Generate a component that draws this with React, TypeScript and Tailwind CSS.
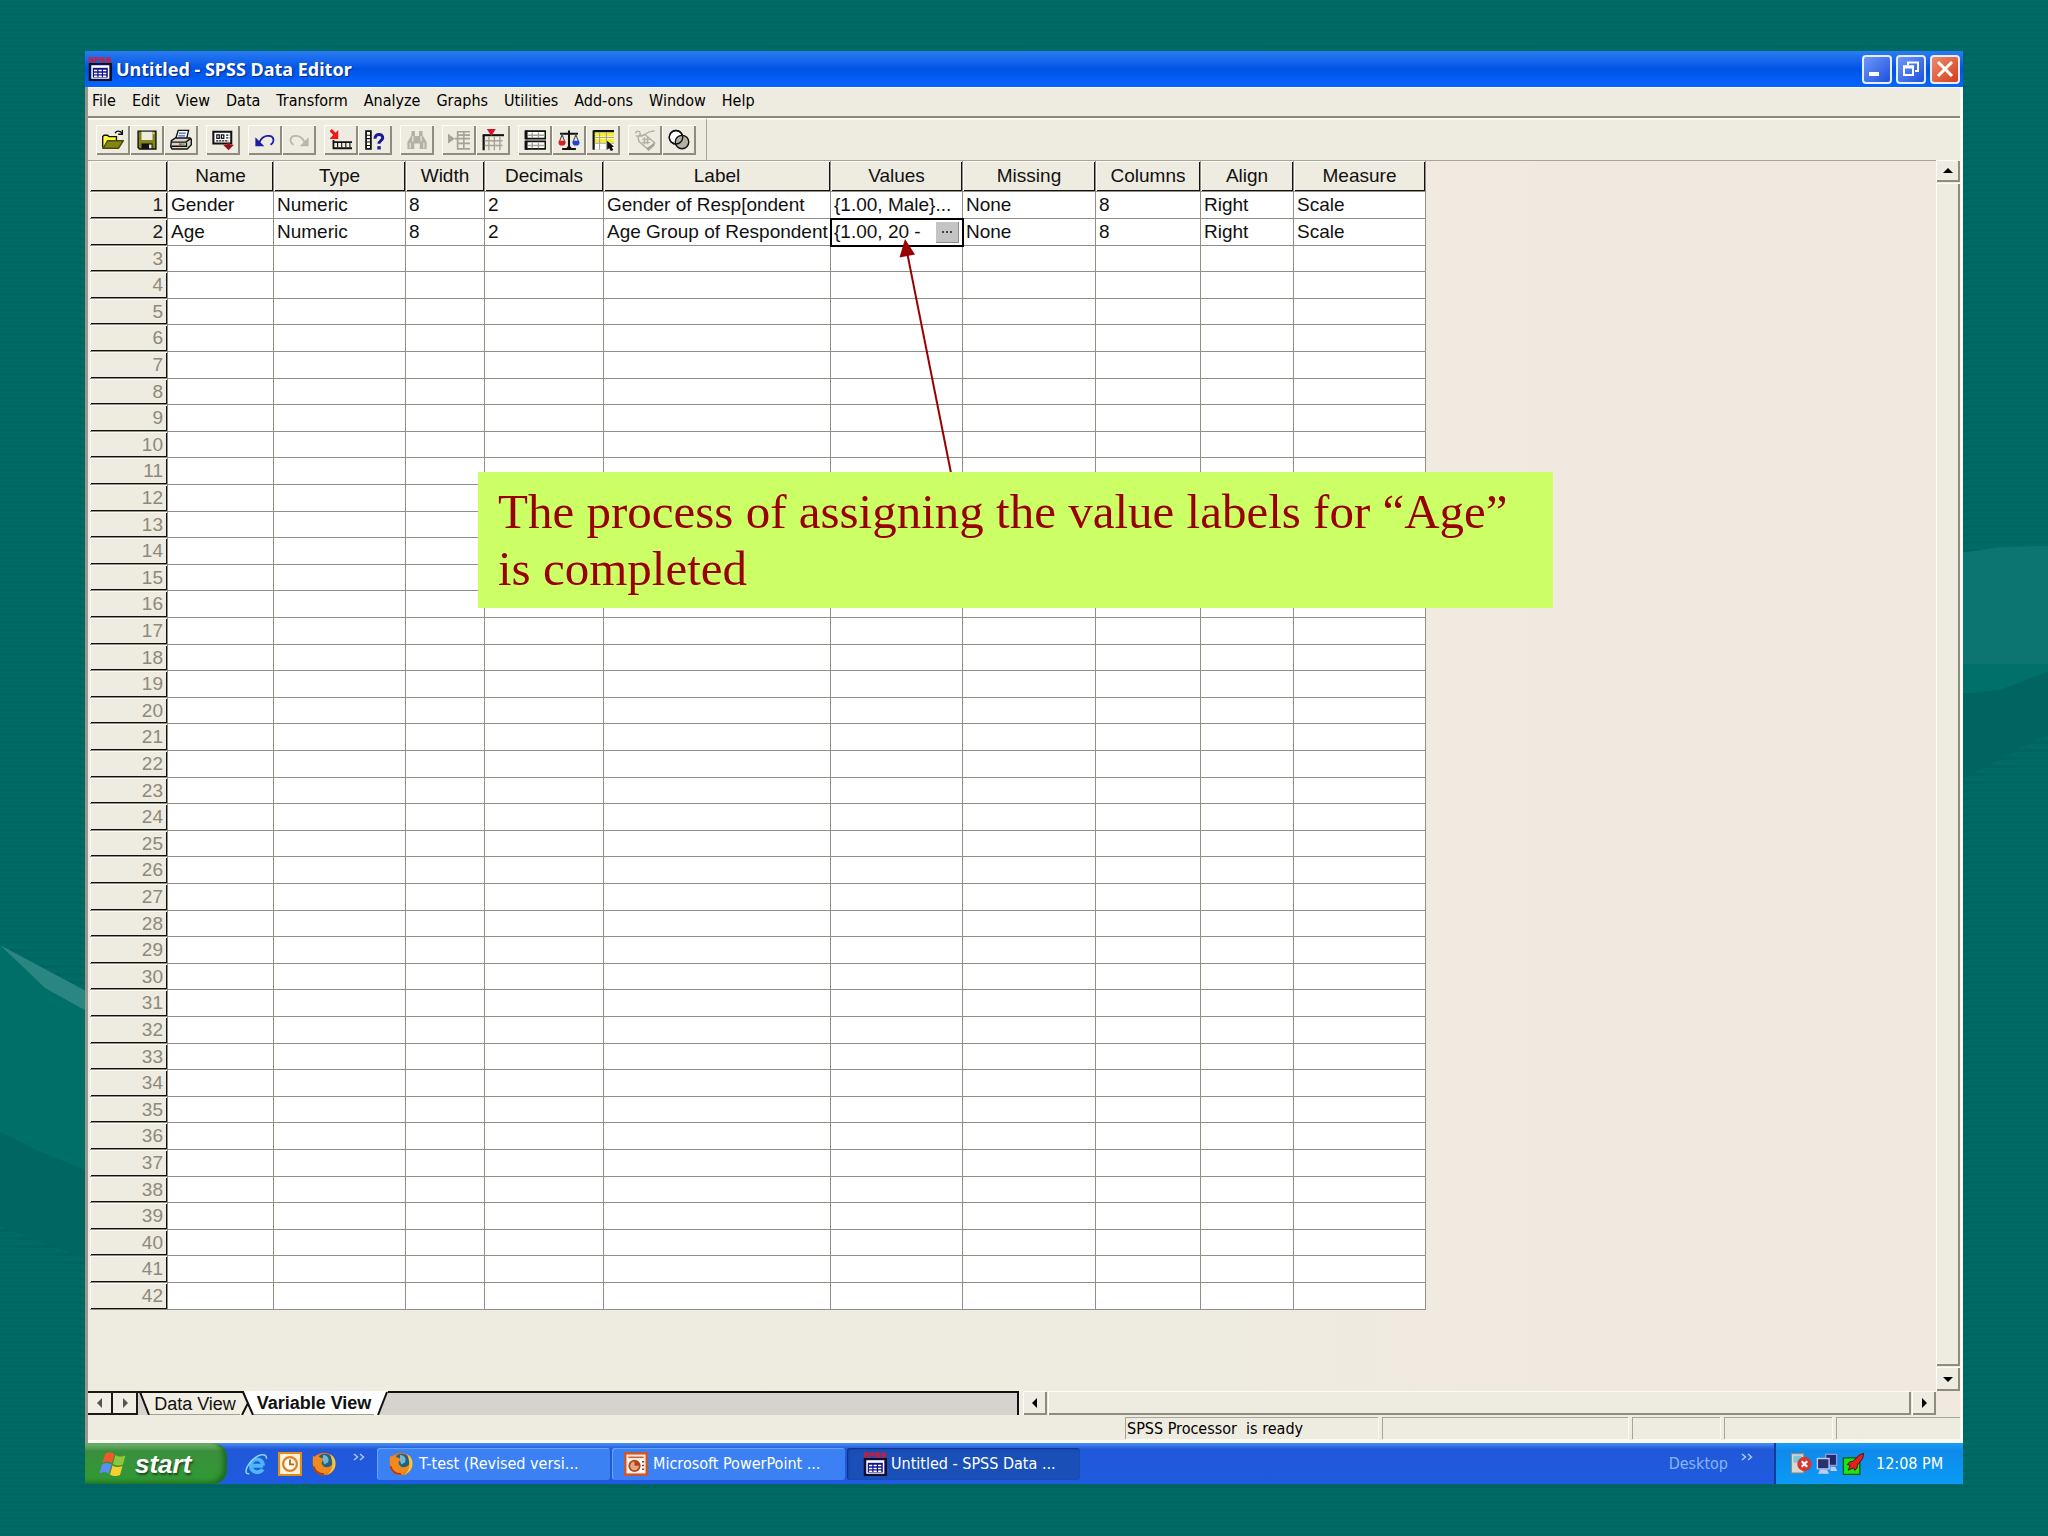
import React from "react";

type Variable = {
  name: string;
  type: string;
  width: string;
  decimals: string;
  label: string;
  values: string;
  missing: string;
  columns: string;
  align: string;
  measure: string;
};

const variables: Variable[] = [
  {
    name: "Gender",
    type: "Numeric",
    width: "8",
    decimals: "2",
    label: "Gender of Resp[ondent",
    values: "{1.00, Male}...",
    missing: "None",
    columns: "8",
    align: "Right",
    measure: "Scale",
  },
  {
    name: "Age",
    type: "Numeric",
    width: "8",
    decimals: "2",
    label: "Age Group of Respondent",
    values: "{1.00, 20 -",
    missing: "None",
    columns: "8",
    align: "Right",
    measure: "Scale",
  },
];

const columns: { key: keyof Variable; title: string; size: string }[] = [
  { key: "name", title: "Name", size: "w-[106px]" },
  { key: "type", title: "Type", size: "w-[132px]" },
  { key: "width", title: "Width", size: "w-[79px]" },
  { key: "decimals", title: "Decimals", size: "w-[119px]" },
  { key: "label", title: "Label", size: "w-[227px]" },
  { key: "values", title: "Values", size: "w-[132px]" },
  { key: "missing", title: "Missing", size: "w-[133px]" },
  { key: "columns", title: "Columns", size: "w-[105px]" },
  { key: "align", title: "Align", size: "w-[93px]" },
  { key: "measure", title: "Measure", size: "w-[132px]" },
];

const rows = Array.from({ length: 42 }, (_, i) => i + 1);

/* ---------- small drawings ---------- */

function Glyph({ children, className = "size-[22px]" }: { children: React.ReactNode; className?: string }) {
  return (
    <svg viewBox="0 0 16 16" className={className} fill="none" aria-hidden="true">
      {children}
    </svg>
  );
}

const OpenIcon = () => (
  <Glyph>
    <path d="M9.500 3c1-2 3.500-2 5 0M14.800 .8v3h-3" stroke="#111" />
    <path d="M.5 13.500V5.500L1.500 4.500H4l1 1h5.500v3" fill="#ffff33" stroke="#111" />
    <path d="M.8 14L4 8.500h11.500l-3.500 5.500z" fill="#84841a" stroke="#4c4c00" />
  </Glyph>
);
const SaveIcon = () => (
  <Glyph>
    <path d="M1.500 1.500h13v13h-12l-1-1z" fill="#84841a" stroke="#111" />
    <path d="M4 2h8v6H4z" fill="#eeebe0" />
    <path d="M4 10.500h8v4H4z" fill="#111" />
    <path d="M9.500 11.300h1.800v2.700H9.500z" fill="#eeebe0" />
    <path d="M12.800 2.500v1.200" stroke="#eeebe0" />
  </Glyph>
);
const PrintIcon = () => (
  <Glyph>
    <path d="M4 7.500l2-6.500h7.500L12 7.500z" fill="#fff" stroke="#111" />
    <path d="M6.500 3h5M6 5h5" stroke="#3b62c8" />
    <path d="M1 8.500L4 6.500h10.500l1 1v4l-3 3H1.500L.5 13z" fill="#d8d5cc" stroke="#111" />
    <path d="M1 9.500h10.500l3.500-2.500M1 12.500h11V10" stroke="#111" />
    <path d="M6.500 11h2" stroke="#e22" />
    <path d="M8.500 11h2" stroke="#2c2" />
  </Glyph>
);
const RecallIcon = () => (
  <Glyph>
    <path d="M1 2h13v8.500H1z" fill="#fff" stroke="#111" strokeWidth="1.500" />
    <path d="M3.500 4.200h1.800v2.600H3.500zM6.800 4.200h1.800v2.600H6.800z" stroke="#111" strokeWidth=".9" />
    <path d="M10.300 4.500h2.400M10.300 6.500h2.400M3 8.600h9" stroke="#111" strokeWidth=".9" strokeDasharray="1.600 .6" />
    <path d="M8 11.500h8l-4 4z" fill="#9a0f1c" />
    <path d="M11 10h2v2h-2z" fill="#9a0f1c" />
  </Glyph>
);
const UndoIcon = () => (
  <Glyph>
    <path d="M4 9.500c2.500-5.500 9-5.500 10-2.500.6 2-.5 3.500-2 4.500" stroke="#1b1ba8" strokeWidth="1.300" />
    <path d="M1 6v6.500h6.500z" fill="#1b1ba8" />
  </Glyph>
);
const RedoIcon = () => (
  <Glyph>
    <path d="M12 9.500c-2.500-5.500-9-5.500-10-2.500-.6 2 .5 3.500 2 4.500" stroke="#b9b6ad" strokeWidth="1.300" />
    <path d="M15 6v6.500H8.500z" fill="#b9b6ad" />
  </Glyph>
);
const GotoCaseIcon = () => (
  <Glyph>
    <path d="M.5 .8l4 4" stroke="#f01818" strokeWidth="2.400" />
    <path d="M6 .8v6.500H-.5z" fill="#f01818" />
    <path d="M2.500 8v6.500M2 9.500h14M2 14h14" stroke="#111" strokeWidth="1.300" />
    <path d="M5.500 10v3.500M8.500 10v3.500M11.500 10v3.500M14.500 10v3.500" stroke="#111" strokeWidth=".8" />
  </Glyph>
);
const VariablesIcon = () => (
  <Glyph>
    <path d="M1.500 1.500h3.500v13H1.500z" fill="#fff" stroke="#111" strokeWidth="1.300" />
    <path d="M1.500 4.500H5M1.500 7H5M1.500 9.500H5M1.500 12H5" stroke="#111" strokeWidth=".8" />
    <path d="M8 7c0-4.200 6-3.800 5.600-.4-.3 1.900-2.700 1.900-2.700 4.200" stroke="#1b1b98" strokeWidth="2.200" />
    <path d="M9.700 12.500h2.500v2.400H9.700z" fill="#1b1b98" />
  </Glyph>
);
const FindIcon = () => (
  <Glyph>
    <path d="M4 1.500h2.500V5H9.500V1.500H12v3l3 5v5h-5v-4H6v4H1v-5l3-5z" fill="#b3b0a7" />
    <path d="M3 10v4M13 10v4M5 5v4M11 5v4" stroke="#eeebe0" strokeWidth=".8" />
  </Glyph>
);
const InsertCaseIcon = () => (
  <Glyph>
    <path d="M0 3.500L5 7l-5 3.500z" fill="#a5a299" />
    <path d="M7 1.500v13.500M7 2h9M5 7h11M7 10.500h9M7 14.500h9M11.500 2v12.500M7 4.500h9" stroke="#a5a299" strokeWidth="1.200" />
  </Glyph>
);
const InsertVariableIcon = () => (
  <Glyph>
    <path d="M1.200 4.500v11" stroke="#111" strokeWidth="1.600" />
    <path d="M.5 4.500h15.500" stroke="#111" strokeWidth="1.500" />
    <path d="M5 5.500v10M9 5.500v10M13 5.500v10M2 8.500h13M2 12h13" stroke="#a5a299" />
    <path d="M3.500 0h6.500L6.800 5z" fill="#d3132c" />
  </Glyph>
);
const SplitFileIcon = () => (
  <Glyph>
    <path d="M1.500 1.500h14v5.500h-14zM1.500 9h14v5.500h-14z" fill="#fff" stroke="#111" strokeWidth="1.200" />
    <path d="M1.500 1v6.500M1.500 8.500v6.500" stroke="#111" strokeWidth="2.200" />
    <path d="M6 2.500v4M10.500 2.500v4M3 4.500h12M6 10v4M10.500 10v4M3 12h12" stroke="#a5a299" />
  </Glyph>
);
const WeightIcon = () => (
  <Glyph>
    <path d="M8 1v12.500M1.500 3.500h13M3 14.500h10" stroke="#111" strokeWidth="1.500" />
    <path d="M6 14l2-2.500L10 14z" fill="#111" />
    <path d="M3 4L.8 10h4.400zM13 4l-2.200 6h4.400z" stroke="#555" strokeWidth=".8" />
    <path d="M.6 8.500h4.600v2.500l-1 1H1.600l-1-1z" fill="#e21b1b" />
    <path d="M10.800 8.500h4.600v2.500l-1 1h-2.600l-1-1z" fill="#2343d8" />
  </Glyph>
);
const SelectCasesIcon = () => (
  <Glyph>
    <path d="M1 1.500h15v13H1z" fill="#fff" />
    <path d="M2 2.500h14v3H2zM2 7h14v3H2z" fill="#f6ee2a" />
    <path d="M1.200 1v14M1 1.500h15" stroke="#111" strokeWidth="1.600" />
    <path d="M5.500 2.500V15M10.500 2.500V15M2 6.200h14M2 10.400h14" stroke="#a5a299" strokeWidth=".8" />
    <path d="M11 8.500v6.500l1.500-1 1.200 2 1.800-.8-1-1.900 1.500-.6z" fill="#111" />
  </Glyph>
);
const ValueLabelsIcon = () => (
  <Glyph>
    <path d="M1 3c1-2 3-2 3.500 0S2 6 1.500 4.500M5 5c2 1 4-4 10-3.500" stroke="#b3b0a7" />
    <path d="M3 5.500l5-1.500 7 6-4.500 5L3.500 9z" stroke="#b3b0a7" strokeWidth="1.100" />
    <path d="M9 14l6-4v2l-4.500 4z" fill="#a5a299" />
    <path d="M7.500 6v5M9.800 6v5M6 7.500h5.500M6 9.800h5.500" stroke="#b3b0a7" />
  </Glyph>
);
const UseSetsIcon = () => (
  <Glyph>
    <circle cx="5.800" cy="6" r="4.900" fill="#fff" stroke="#111" />
    <circle cx="10.200" cy="9.500" r="4.900" fill="#b3b0a7" stroke="#111" />
    <circle cx="5.800" cy="6" r="4.900" stroke="#111" />
  </Glyph>
);

const SpssIcon = () => (
  <Glyph className="size-6 shrink-0">
    <path
      d="M3.500 .6H1v1.200h2.200V3.200H.5M4.800 3.600V.6h2.300v1.300H4.800M11 .6H8.600v1.200h2.200v1.400H8.300M15 .6h-2.400v1.200h2.200v1.400h-2.500"
      stroke="#e0162b"
      strokeWidth=".9"
    />
    <path d="M1 4.500h14.500V15.500H1z" fill="#10106c" stroke="#111" />
    <path d="M2.200 5.500h12v9h-12z" fill="#fff" />
    <path d="M3.200 7.200h10v6.500h-10z" fill="#10108c" />
    <path d="M4 9h8.500M4 11h8.500M4 12.900h8.500" stroke="#fff" strokeDasharray="2.200 .8" />
  </Glyph>
);
const FirefoxIcon = () => (
  <Glyph className="size-6 shrink-0">
    <circle cx="8" cy="8" r="7.500" fill="#e8731a" />
    <circle cx="8.600" cy="6.400" r="5.200" fill="#23617f" />
    <path d="M7.500 1.800c3 .6 4.200 2.600 3.200 5l-2.500 1.500L7 5z" fill="#74b8cf" />
    <path d="M.8 2.500c1 .9 1.500.5 2.700-1C4.300 3.700 6 3.500 7.500 4.800L6.300 7.300c1 3.600 4.700 3.700 7.700.7-1 5-4 7-7 6.800C2.500 14.500-.5 10 .8 2.500z" fill="#f08a1e" />
    <path d="M12 1.500c3 1.500 4 4.300 3.600 7.300-.4 3-2.900 5.700-5.900 6.500 3-2 4.300-5 3.800-8-.2-2-.6-4-1.500-5.800z" fill="#f9c440" />
    <path d="M1 9.500c1 3.500 3.500 5.300 7 5.300" stroke="#b8380d" strokeWidth="1.200" />
  </Glyph>
);
const ExplorerIcon = () => (
  <Glyph className="size-6">
    <path d="M12.800 9.200H5.200M12.500 11.500c-2.200 3.200-7.800 2.400-7.900-2.300C4.500 3.800 12.500 3.200 12.700 9" stroke="#4db8f5" strokeWidth="2.600" />
    <path d="M15 4.500c.4-4.500-6-3-10 1.500-4 4.300-5 9-1.500 8.500" stroke="#8fd4fb" strokeWidth="1" />
  </Glyph>
);
const OutlookIcon = () => (
  <Glyph className="size-6">
    <path d="M.7.700h14.600v14.600H.7z" fill="#fff4da" stroke="#e8891b" strokeWidth="1.400" />
    <circle cx="8" cy="8" r="4.600" fill="#fffaf0" stroke="#d8852a" strokeWidth="1.500" />
    <path d="M8 5v3.300h2.800" stroke="#b5651b" strokeWidth="1.200" />
  </Glyph>
);
const PowerPointIcon = () => (
  <Glyph className="size-6 shrink-0">
    <path d="M.8.800h14.400v14.400H.8z" fill="#fbe3d6" stroke="#c9562c" strokeWidth="1.600" />
    <path d="M3 3.500h10" stroke="#c9562c" strokeWidth=".9" />
    <path d="M2.600 4.800h10.800v8.800H2.600z" fill="#fff" />
    <circle cx="7" cy="9.200" r="3.500" fill="#e8a583" stroke="#b2431d" strokeWidth="1.200" />
    <path d="M7 9.200V5.700a3.500 3.500 0 013.500 3.500z" fill="#b2431d" />
    <path d="M12 6.500h1.400M12 9h1.400M12 11.500h1.400" stroke="#8a3a1c" />
  </Glyph>
);
const WindowsFlag = () => (
  <svg viewBox="0 0 28 26" className="h-[26px] w-7" aria-hidden="true">
    <path d="M6 3c3-2.500 6-2.500 9.500 0L13 12c-3-2-6.500-2-9.500 0z" fill="#ee5a29" />
    <path d="M16.500 4c3.500 2 6.500 2 10 .5L24 13.500c-3 1.500-6.500 1.500-10-.5z" fill="#8cc83c" />
    <path d="M3 13.500c3-2 6-2 9.500 0L10 22.500c-3-2-6.500-2-9.500 0z" fill="#5a8ff0" />
    <path d="M13.500 14.500c3.500 2 6.500 2 10 .5L21 24c-3 1.500-6.500 1.500-10-.5z" fill="#f8cf2c" />
  </svg>
);
const Chevrons = ({ className }: { className: string }) => (
  <svg viewBox="0 0 12 8" className={className} fill="none" aria-hidden="true">
    <path d="M1 1l3.500 3L1 7M7 1l3.500 3L7 7" stroke="currentColor" strokeWidth="1.500" />
  </svg>
);

function Arrow({ dir, className = "text-black" }: { dir: "up" | "down" | "left" | "right"; className?: string }) {
  const shapes = { up: "M1 8l5-5 5 5z", down: "M1 4l5 5 5-5z", left: "M8 1L3 6l5 5z", right: "M4 1l5 5-5 5z" };
  return (
    <svg viewBox="0 0 12 12" className={`size-3 ${className}`} fill="currentColor" aria-hidden="true">
      <path d={shapes[dir]} />
    </svg>
  );
}

/* ---------- chrome ---------- */

const raised =
  "shadow-[inset_1px_1px_0_#fffdf5,inset_-2px_-2px_0_#8f8b7f] bg-[#eeebe0]";

const uiFont = "font-['DejaVu_Sans_Condensed','Noto_Sans',sans-serif]";

const toolGroups: [string, () => React.ReactElement][][] = [
  [["Open File", OpenIcon], ["Save File", SaveIcon], ["Print", PrintIcon]],
  [["Dialog Recall", RecallIcon]],
  [["Undo", UndoIcon], ["Redo", RedoIcon]],
  [["Go to Case", GotoCaseIcon], ["Variables", VariablesIcon]],
  [["Find", FindIcon]],
  [["Insert Cases", InsertCaseIcon], ["Insert Variable", InsertVariableIcon]],
  [["Split File", SplitFileIcon], ["Weight Cases", WeightIcon], ["Select Cases", SelectCasesIcon]],
  [["Value Labels", ValueLabelsIcon], ["Use Sets", UseSetsIcon]],
];

function Backdrop() {
  return (
    <svg
      className="absolute inset-0 size-full"
      viewBox="0 0 2048 1536"
      preserveAspectRatio="none"
      aria-hidden="true"
    >
      <defs>
        <pattern id="stripes" width="64" height="8" patternUnits="userSpaceOnUse">
          <rect width="64" height="8" fill="#006a65" />
          <rect y="5" width="64" height="3" fill="#006460" />
        </pattern>
      </defs>
      <rect width="2048" height="1536" fill="url(#stripes)" />
      <path d="M0 945L45 988L90 1013V1172L40 1152L0 1132z" fill="#006f68" />
      <path d="M0 1132L40 1152L90 1172V1260L0 1226z" fill="#006661" />
      <path d="M0 945L86 991L90 1013L45 988z" fill="#2a8681" />
      <path d="M1960 553L2000 547L2048 546V668L1960 664z" fill="#0c7571" />
      <path d="M1960 664L2048 664V672L2000 690L1960 694z" fill="#00706a" />
      <path d="M1960 694L2000 690L2048 672V734L1960 780z" fill="#006561" />
    </svg>
  );
}

function TitleBar() {
  const box = "flex h-[29px] w-[30px] items-center justify-center rounded-[4px] border-2 border-[#e6edfb]";
  return (
    <header className="flex h-9 items-center bg-linear-to-b from-[#2a7bf2] via-[#0153e6] to-[#0366ff] pr-[3px] pl-[3px]">
      <SpssIcon />
      <h1 className="ml-1 flex-1 font-['Noto_Sans',sans-serif] text-lg font-bold text-white [text-shadow:1px_1px_1px_#0b2a80]">
        Untitled - SPSS Data Editor
      </h1>
      <div className="flex gap-1">
        <button aria-label="Minimize" className={`${box} bg-linear-to-br from-[#6f96f5] to-[#1d4fe0]`}>
          <svg viewBox="0 0 20 20" className="size-5" aria-hidden="true">
            <path d="M2 13h10v4H2z" fill="#fff" />
          </svg>
        </button>
        <button aria-label="Restore" className={`${box} bg-linear-to-br from-[#6f96f5] to-[#1d4fe0]`}>
          <svg viewBox="0 0 20 20" className="size-5" fill="none" aria-hidden="true">
            <path d="M7 6V3.500h10V12h-3" stroke="#fff" strokeWidth="2" />
            <path d="M3 8.500h9V16H3z" stroke="#fff" strokeWidth="2" />
            <path d="M2 7.500h11" stroke="#fff" strokeWidth="2.500" />
          </svg>
        </button>
        <button aria-label="Close" className={`${box} bg-linear-to-br from-[#ec8a6a] to-[#d23c14]`}>
          <svg viewBox="0 0 20 20" className="size-5" aria-hidden="true">
            <path d="M3 3l14 14M17 3L3 17" stroke="#fff" strokeWidth="3" />
          </svg>
        </button>
      </div>
    </header>
  );
}

function MenuBar() {
  const items = ["File", "Edit", "View", "Data", "Transform", "Analyze", "Graphs", "Utilities", "Add-ons", "Window", "Help"];
  return (
    <nav className={`flex h-[29px] items-center gap-4 border-t border-[#fbf9f2] pb-[3px] pl-1 ${uiFont} text-base text-black`}>
      {items.map((m) => (
        <button key={m}>{m}</button>
      ))}
    </nav>
  );
}

function ToolBar() {
  return (
    <div className="flex h-11 items-stretch border-t-2 border-[#8b877c] bg-[#eeebe0]">
      <div className="flex items-center gap-2 border-t-2 border-r border-t-[#fbf9f2] border-r-[#a9a59b] pr-[10px] pl-2">
        {toolGroups.map((group) => (
          <div key={group[0][0]} className="flex">
            {group.map(([label, Icon]) => (
              <button key={label} aria-label={label} className={`flex h-[30px] w-[34px] items-center justify-center ${raised}`}>
                <Icon />
              </button>
            ))}
          </div>
        ))}
      </div>
      <div className="flex-1 border-t-2 border-[#fbf9f2]" />
    </div>
  );
}

const headCell =
  "border-r border-b border-[#928e86] bg-[#eeebe0] font-normal shadow-[inset_1px_1px_0_#fcfaf2,inset_-1px_-1px_0_#111]";

function VariableTable() {
  return (
    <table className="w-[1336px] table-fixed border-separate border-spacing-0 font-['Liberation_Sans',Arial,sans-serif] text-[19px] leading-6 text-[#111]">
      <thead>
        <tr className="h-[31px]">
          <th className={`w-[78px] ${headCell}`} aria-label="Row" />
          {columns.map((c) => (
            <th key={c.key} scope="col" className={`${c.size} ${headCell}`}>
              {c.title}
            </th>
          ))}
        </tr>
      </thead>
      <tbody>
        {rows.map((n, i) => {
          const v = variables[i];
          return (
            <tr key={n} className={i % 5 === 2 || i % 5 === 4 ? "h-[26px]" : "h-[27px]"}>
              <th scope="row" className={`${headCell} pr-1 text-right ${v ? "text-[#222]" : "text-[#8d897b]"}`}>
                {n}
              </th>
              {columns.map((c) => {
                const active = n === 2 && c.key === "values";
                return (
                  <td
                    key={c.key}
                    className={`overflow-hidden border-r border-b border-[#928e86] bg-white pl-[3px] whitespace-nowrap ${
                      active ? "outline-2 -outline-offset-1 outline-black" : ""
                    }`}
                  >
                    {active ? (
                      <div className="flex items-center justify-between pr-[3px]">
                        <span>{v.values}</span>
                        <button
                          aria-label="Edit value labels"
                          className="flex h-[21px] w-[23px] items-center justify-center border-r border-b border-[#8d8d8d] bg-[#c4c4c4]"
                        >
                          <svg viewBox="0 0 12 4" className="h-1 w-3" aria-hidden="true">
                            <path d="M1 1h2v2H1zM5 1h2v2H5zM9 1h2v2H9z" fill="#444" />
                          </svg>
                        </button>
                      </div>
                    ) : (
                      v?.[c.key]
                    )}
                  </td>
                );
              })}
            </tr>
          );
        })}
      </tbody>
    </table>
  );
}

function SheetTabs() {
  const nav =
    "flex w-[25px] items-center justify-center border-t-2 border-r-2 border-b-2 border-[#1a1a1a] bg-[#f1eee4]";
  return (
    <div className="mr-1 flex w-[931px] shrink-0 font-['Liberation_Sans',Arial,sans-serif] text-lg leading-5">
      <button aria-label="Previous sheet" className={nav}>
        <Arrow dir="left" className="text-[#555]" />
      </button>
      <button aria-label="Next sheet" className={nav}>
        <Arrow dir="right" className="text-[#555]" />
      </button>
      <svg viewBox="0 0 12 24" className="h-6 w-3 shrink-0" aria-hidden="true">
        <path d="M0 0h12v24H0z" fill="#d6d3ce" />
        <path d="M3 0h9v24h-1z" fill="#f1eee4" />
        <path d="M0 1h12" stroke="#111" strokeWidth="2" />
        <path d="M2 1l9 23" stroke="#111" strokeWidth="2" />
      </svg>
      <button className="w-[90px] border-t-2 border-b border-t-[#111] border-b-[#a39f97] bg-[#f1eee4] text-[#111]">Data View</button>
      <svg viewBox="0 0 14 24" className="h-6 w-[14px] shrink-0" aria-hidden="true">
        <path d="M0 0h14v24H0z" fill="#f1eee4" />
        <path d="M4 0h10v24h-1z" fill="#fff" />
        <path d="M0 1h4" stroke="#111" strokeWidth="2" />
        <path d="M3 1l10 23M8 12L2 24" stroke="#111" strokeWidth="2" />
      </svg>
      <button className="w-[120px] border-b border-[#a39f97] bg-white font-bold text-[#111]">Variable View</button>
      <svg viewBox="0 0 14 24" className="h-6 w-[14px] shrink-0" aria-hidden="true">
        <path d="M0 0h14v24H0z" fill="#d6d3ce" />
        <path d="M0 0h13L4 24H0z" fill="#fff" />
        <path d="M13 1L4 24" stroke="#111" strokeWidth="2" />
      </svg>
      <div className="flex-1 border-t-2 border-r-2 border-[#111] bg-[#d6d3ce]" />
    </div>
  );
}

function StatusBar() {
  const pane = "h-[22px] border-t border-l border-[#a9a59b] shadow-[1px_1px_0_#fcfaf2]";
  return (
    <footer className={`flex h-7 items-start gap-1 border-b-[3px] border-[#fcfaf2] pt-0.5 ${uiFont} text-base leading-[22px] text-black`}>
      <div className="flex-1" />
      <div className={`${pane} w-[253px] pl-px whitespace-pre`}>SPSS Processor  is ready</div>
      <div className={`${pane} w-[246px]`} />
      <div className={`${pane} w-[88px]`} />
      <div className={`${pane} w-[108px]`} />
      <div className={`${pane} w-[124px]`} />
    </footer>
  );
}

function TaskBar() {
  const task = `flex h-8 w-[233px] items-center rounded-[3px] ${uiFont} text-base whitespace-nowrap text-white`;
  return (
    <div className="flex h-[41px] items-stretch bg-linear-to-b from-[#4a90f8] via-[#2158d8] via-15% to-[#1e5be0]">
      <button className="flex w-[142px] items-center rounded-r-[14px] bg-linear-to-b from-[#78b878] via-[#3a8f3c] via-20% to-[#2f9a33] pl-[14px] shadow-[inset_-4px_-2px_5px_#1e6a22]">
        <WindowsFlag />
        <span className="ml-2 font-['Liberation_Sans',Arial,sans-serif] text-[26px] leading-7 font-bold text-white italic [text-shadow:1px_2px_2px_#1c4a1e]">
          start
        </span>
      </button>
      <div className="flex items-center gap-[10px] pl-[17px]">
        <button aria-label="Internet Explorer"><ExplorerIcon /></button>
        <button aria-label="Outlook"><OutlookIcon /></button>
        <button aria-label="Firefox"><FirefoxIcon /></button>
      </div>
      <button aria-label="More quick launch items" className="flex w-[41px] justify-center pt-[10px] pl-1 text-[#a9cbfb]">
        <Chevrons className="h-2 w-3" />
      </button>
      <div className="flex items-center gap-[2px]">
        <button className={`${task} bg-[#3c81f3] pl-3 shadow-[inset_1px_1px_1px_#6ba3fb]`}>
          <FirefoxIcon />
          <span className="ml-[6px]">T-test (Revised versi...</span>
        </button>
        <button className={`${task} bg-[#3c81f3] pl-3 shadow-[inset_1px_1px_1px_#6ba3fb]`}>
          <PowerPointIcon />
          <span className="ml-[5px]">Microsoft PowerPoint ...</span>
        </button>
        <button className={`${task} bg-[#1a4fb8] pl-4 shadow-[inset_1px_1px_2px_#0d2f80]`}>
          <SpssIcon />
          <span className="ml-1">Untitled - SPSS Data ...</span>
        </button>
      </div>
      <div className="flex-1" />
      <span className={`self-center ${uiFont} text-base text-[#86b5f8]`}>Desktop</span>
      <button aria-label="More desktop items" className="flex w-[46px] justify-center pt-[10px] pr-2 text-[#a9cbfb]">
        <Chevrons className="h-2 w-3" />
      </button>
      <div className="flex w-[189px] items-center gap-1 border-l-2 border-[#0c3f9c] bg-linear-to-b from-[#1a9df6] via-[#0f8aea] via-20% to-[#0b9af5] pl-[14px]">
        <Glyph className="size-[22px]">
          <path d="M1 .5h9v14H1z" fill="#d8d8cc" stroke="#8a8a80" strokeWidth=".8" />
          <path d="M2.500 2h6v5h-6z" fill="#79c7dd" />
          <circle cx="10.500" cy="8" r="5.200" fill="#d9352f" />
          <path d="M8.500 6l4 4M12.500 6l-4 4" stroke="#fff" strokeWidth="1.600" />
        </Glyph>
        <Glyph className="size-[22px]">
          <path d="M7 1h8v8H7z" fill="#1f2a66" stroke="#8f97dc" />
          <path d="M1 4h8.500v7.500H1z" fill="#2a3170" stroke="#c3c8f0" />
          <path d="M1.500 15h8l-1.500-3H3zM10.500 13h5L14 10h-3.500z" fill="#c3c8f0" />
        </Glyph>
        <Glyph className="size-[22px]">
          <path d="M1 3.500h12v12H1z" fill="#18e818" stroke="#0a5a0a" />
          <path d="M15.800 .3L12.500 1.500 8 6 5.500 6.500 3.800 8.500l2.200.3L4.500 12.500 8.500 10.800l.8 1.900 1.700-2 .3-2L15 4z" fill="#e3201b" stroke="#5a0a0a" strokeWidth=".7" />
        </Glyph>
        <time className={`ml-2 ${uiFont} text-base text-white`}>12:08 PM</time>
      </div>
    </div>
  );
}

export default function App() {
  return (
    <div className="relative flex min-h-screen flex-col bg-[#006864] px-[85px] pt-[51px] pb-[52px]">
      <Backdrop />
      <main className="relative flex flex-1 flex-col">
        <TitleBar />
        <div className="flex flex-1 flex-col border-r-[3px] border-l-[3px] border-r-[#fbf9f2] border-l-[#9b968b] bg-[#eeebe0]">
          <MenuBar />
          <ToolBar />
          <div className="flex flex-1 bg-linear-to-r from-[#eeebe0] from-60% to-[#f1e9df] to-80%">
            <div className="flex-1 border-t border-[#a9a59b] pl-0.5">
              <VariableTable />
            </div>
            <div className="flex w-6 flex-col gap-px">
              <button aria-label="Scroll up" className={`flex h-[22px] items-center justify-center ${raised}`}>
                <Arrow dir="up" />
              </button>
              <div className={`flex-1 ${raised}`} />
              <button aria-label="Scroll down" className={`flex h-6 items-center justify-center ${raised}`}>
                <Arrow dir="down" />
              </button>
            </div>
          </div>
          <div className="flex h-6">
            <SheetTabs />
            <div className="flex flex-1 gap-px">
              <button aria-label="Scroll left" className={`flex w-6 items-center justify-center ${raised}`}>
                <Arrow dir="left" />
              </button>
              <div className={`flex-1 ${raised}`} />
              <button aria-label="Scroll right" className={`flex w-6 items-center justify-center ${raised}`}>
                <Arrow dir="right" />
              </button>
            </div>
            <div className="w-6 bg-[#f1e9df]" />
          </div>
          <StatusBar />
        </div>
        <TaskBar />
      </main>

      <svg viewBox="0 0 64 236" className="absolute top-[238px] left-[895px] h-[236px] w-16" aria-hidden="true">
        <path d="M12 14L56 235" stroke="#990000" strokeWidth="2" />
        <path d="M10 1L4.500 19.500L20 16.500z" fill="#990000" />
      </svg>
      <p className="absolute top-[472px] left-[478px] w-[1075px] bg-[#ccff66] pt-[11px] pr-8 pb-[11px] pl-5 font-['Liberation_Serif','Times_New_Roman',serif] text-[49px] leading-[57px] text-[#990000]">
        The process of assigning the value labels for “Age” is completed
      </p>
    </div>
  );
}
